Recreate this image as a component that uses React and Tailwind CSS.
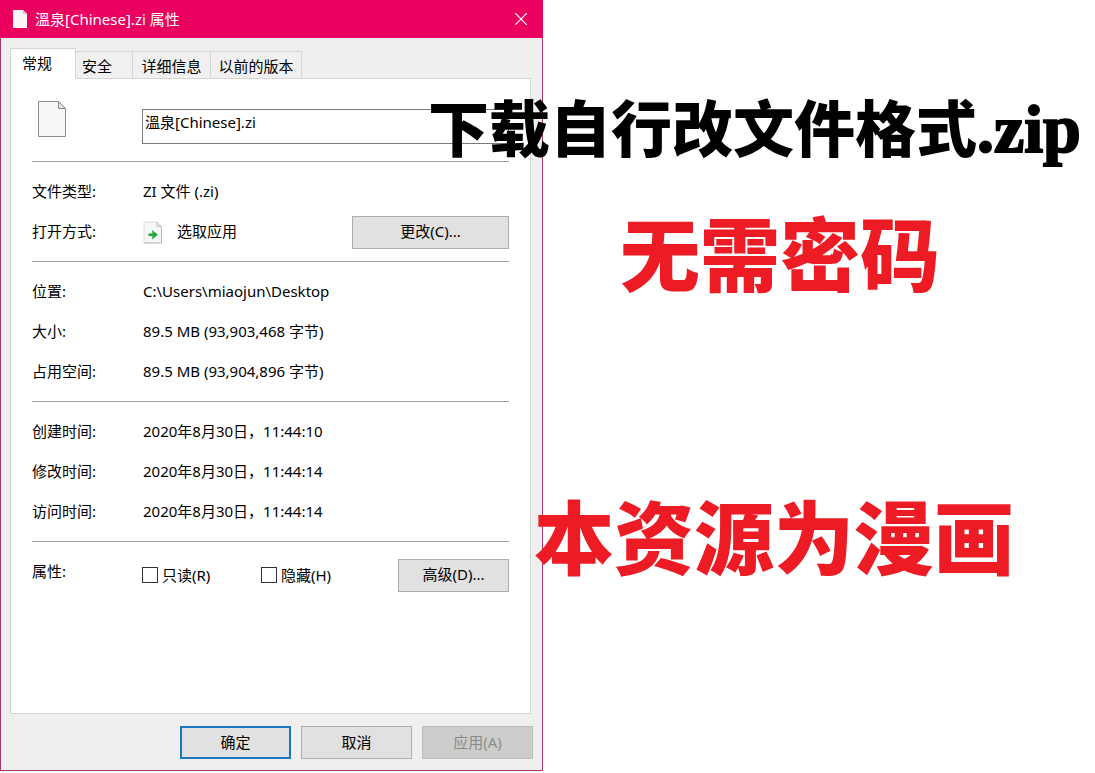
import React, { useState } from 'react';

const TABS = [
  { id: 'general', label: '常规' },
  { id: 'security', label: '安全' },
  { id: 'details', label: '详细信息' },
  { id: 'versions', label: '以前的版本' },
];

const TAB_WIDTHS = {
  general: 'w-[66px]',
  security: 'w-[57px]',
  details: 'w-[78px]',
  versions: 'w-[91px]',
};

const BUTTON = 'h-[33px] border border-[#adadad] bg-[#e1e1e1] pb-0.5 text-center hover:bg-[#e5f1fb] hover:border-[#0078d7]';

function FileIcon({ className }) {
  return (
    <svg className={className} viewBox="0 0 28 36" aria-hidden="true">
      <path d="M.5.5h20l7 7v28H.5z" fill="#f7f8f9" stroke="#8a8a8a" />
      <path d="M20.5.5v7h7z" fill="#e4e4e4" stroke="#8a8a8a" />
    </svg>
  );
}

function TitleFileIcon() {
  return (
    <svg className="h-[18px] w-[14px]" viewBox="0 0 14 18" aria-hidden="true">
      <path d="M0 0h10l4 4v14H0z" fill="#fbf6f8" />
      <path d="M10 0v4h4z" fill="#e3c3d0" />
    </svg>
  );
}

function OpenWithIcon() {
  return (
    <svg className="h-[23px] w-5" viewBox="0 0 20 23" aria-hidden="true">
      <path d="M1 1h13l4.500 4.500V22H1z" fill="#f6f6f6" stroke="#dcdcdc" />
      <path d="M14 1v4.500h4.500z" fill="#e6e6e6" stroke="#c6c6c6" />
      <path d="M1 22h17.500V6" fill="none" stroke="#bdbdbd" />
      <path d="M5.500 12.500H9.500L9 9L15 13.700L9 18.500L9.500 15H5.500z" fill="#22a43c" />
    </svg>
  );
}

function Section({ children }) {
  return <dl className="border-t border-[#a0a0a0] pt-2.5 pb-[9px]">{children}</dl>;
}

function Row({ label, children }) {
  return (
    <div className="flex h-10 items-center">
      <dt className="w-[111px] shrink-0 pb-0.5">{label}</dt>
      <dd className="flex min-w-0 flex-1 items-center">{children}</dd>
    </div>
  );
}

function TextRow({ label, value }) {
  return (
    <Row label={label}>
      <span className="pb-0.5">{value}</span>
    </Row>
  );
}

function Check({ id, label }) {
  return (
    <div className="flex w-[119px] items-center gap-1">
      <input
        id={id}
        type="checkbox"
        className="size-4 shrink-0 appearance-none border border-[#333] bg-white checked:bg-[#333]"
      />
      <label htmlFor={id}>{label}</label>
    </div>
  );
}

function GeneralPanel() {
  return (
    <>
      <div className="flex h-[82px] items-start">
        <div className="w-[110px] shrink-0 pt-[22px] pl-1.5">
          <FileIcon className="h-9 w-7" />
        </div>
        <input
          type="text"
          aria-label="文件名"
          defaultValue="溫泉[Chinese].zi"
          className="mt-[30px] h-[35px] min-w-0 flex-1 border border-[#7a7a7a] bg-white px-0.5 pb-2.5 outline-none"
        />
      </div>

      <Section>
        <TextRow label="文件类型:" value="ZI 文件 (.zi)" />
        <Row label="打开方式:">
          <OpenWithIcon />
          <span className="ml-3.5 pb-0.5">选取应用</span>
          <button type="button" className={`${BUTTON} ml-auto w-[157px]`}>更改(C)...</button>
        </Row>
      </Section>

      <Section>
        <TextRow label="位置:" value="C:\Users\miaojun\Desktop" />
        <TextRow label="大小:" value="89.5 MB (93,903,468 字节)" />
        <TextRow label="占用空间:" value="89.5 MB (93,904,896 字节)" />
      </Section>

      <Section>
        <TextRow label="创建时间:" value="2020年8月30日，11:44:10" />
        <TextRow label="修改时间:" value="2020年8月30日，11:44:14" />
        <TextRow label="访问时间:" value="2020年8月30日，11:44:14" />
      </Section>

      <fieldset className="border-t border-[#a0a0a0] pt-2.5 pb-[115px]">
        <div className="flex items-start">
          <span className="flex h-10 w-[110px] shrink-0 items-center pb-0.5">属性:</span>
          <div className="flex h-[46px] flex-1 items-center">
            <Check id="readonly" label="只读(R)" />
            <Check id="hidden" label="隐藏(H)" />
            <button type="button" className={`${BUTTON} ml-auto w-[111px]`}>高级(D)...</button>
          </div>
        </div>
      </fieldset>
    </>
  );
}

function PropertiesDialog() {
  const [tab, setTab] = useState('general');

  return (
    <div
      role="dialog"
      aria-labelledby="dialog-title"
      className="w-full max-w-[543px] border border-t-0 border-[#a8376b] bg-[#efefef]"
    >
      <header className="-mx-px flex h-[38px] items-center bg-[#ea005e] pl-[13px] text-white">
        <TitleFileIcon />
        <h1 id="dialog-title" className="ml-2 flex-1">溫泉[Chinese].zi 属性</h1>
        <button type="button" aria-label="关闭" className="flex h-full w-[45px] items-center justify-center hover:bg-[#e81123]">
          <svg className="size-3" viewBox="0 0 12 12" fill="none" stroke="currentColor" strokeWidth="1.2" aria-hidden="true">
            <path d="M0 0l12 12M12 0L0 12" />
          </svg>
        </button>
      </header>

      <div className="px-[9px] pt-2.5 pr-[11px]">
        <div role="tablist" className="flex h-[30px] items-end">
          {TABS.map(({ id, label }) => (
            <button
              key={id}
              type="button"
              role="tab"
              aria-selected={tab === id}
              onClick={() => setTab(id)}
              className={`${TAB_WIDTHS[id]} border-[#d5d5d5] ${
                tab === id
                  ? 'relative -mb-px h-[31px] border border-b-0 bg-white pr-3 pb-0.5'
                  : 'h-[27px] border-t border-r bg-[#f0f0f0] pt-0.5 ' + (id === 'security' ? 'pr-3.5' : '')
              }`}
            >
              {label}
            </button>
          ))}
        </div>
        <div role="tabpanel" className="min-h-[636px] border border-[#d5d5d5] bg-white px-[21px]">
          {tab === 'general' && <GeneralPanel />}
        </div>
      </div>

      <footer className="flex justify-end gap-2.5 pt-3 pr-[9px] pb-[11px]">
        <button type="button" className="h-[33px] w-[111px] border-2 border-[#1a78bd] bg-[#e1e1e1] pb-0.5">确定</button>
        <button type="button" className={`${BUTTON} w-[111px]`}>取消</button>
        <button type="button" disabled className="h-[33px] w-[111px] border border-[#bfbfbf] bg-[#cccccc] pb-0.5 text-[#8a8a8a]">
          应用(A)
        </button>
      </footer>
    </div>
  );
}

export default function App() {
  return (
    <main className="relative min-h-screen overflow-hidden bg-white font-['Noto_Sans','Noto_Sans_CJK_SC',sans-serif] text-[15px] leading-5 text-black">
      <PropertiesDialog />

      {/* big notes written over the dialog */}
      <div className="pointer-events-none font-['Noto_Sans_CJK_SC',sans-serif] font-black whitespace-nowrap">
        <p className="absolute top-[86px] left-[428px] text-[61px] leading-[80px]">
          下载自行改文件格式
          <span className="font-['Liberation_Serif',serif] text-[68px] [-webkit-text-stroke:2px_black]">.zip</span>
        </p>
        <p className="absolute top-[200px] left-[620px] text-[80px] leading-[100px] text-[#ed1c24]">无需密码</p>
        <p className="absolute top-[483px] left-[534px] text-[80px] leading-[100px] text-[#ed1c24]">本资源为漫画</p>
      </div>
    </main>
  );
}
